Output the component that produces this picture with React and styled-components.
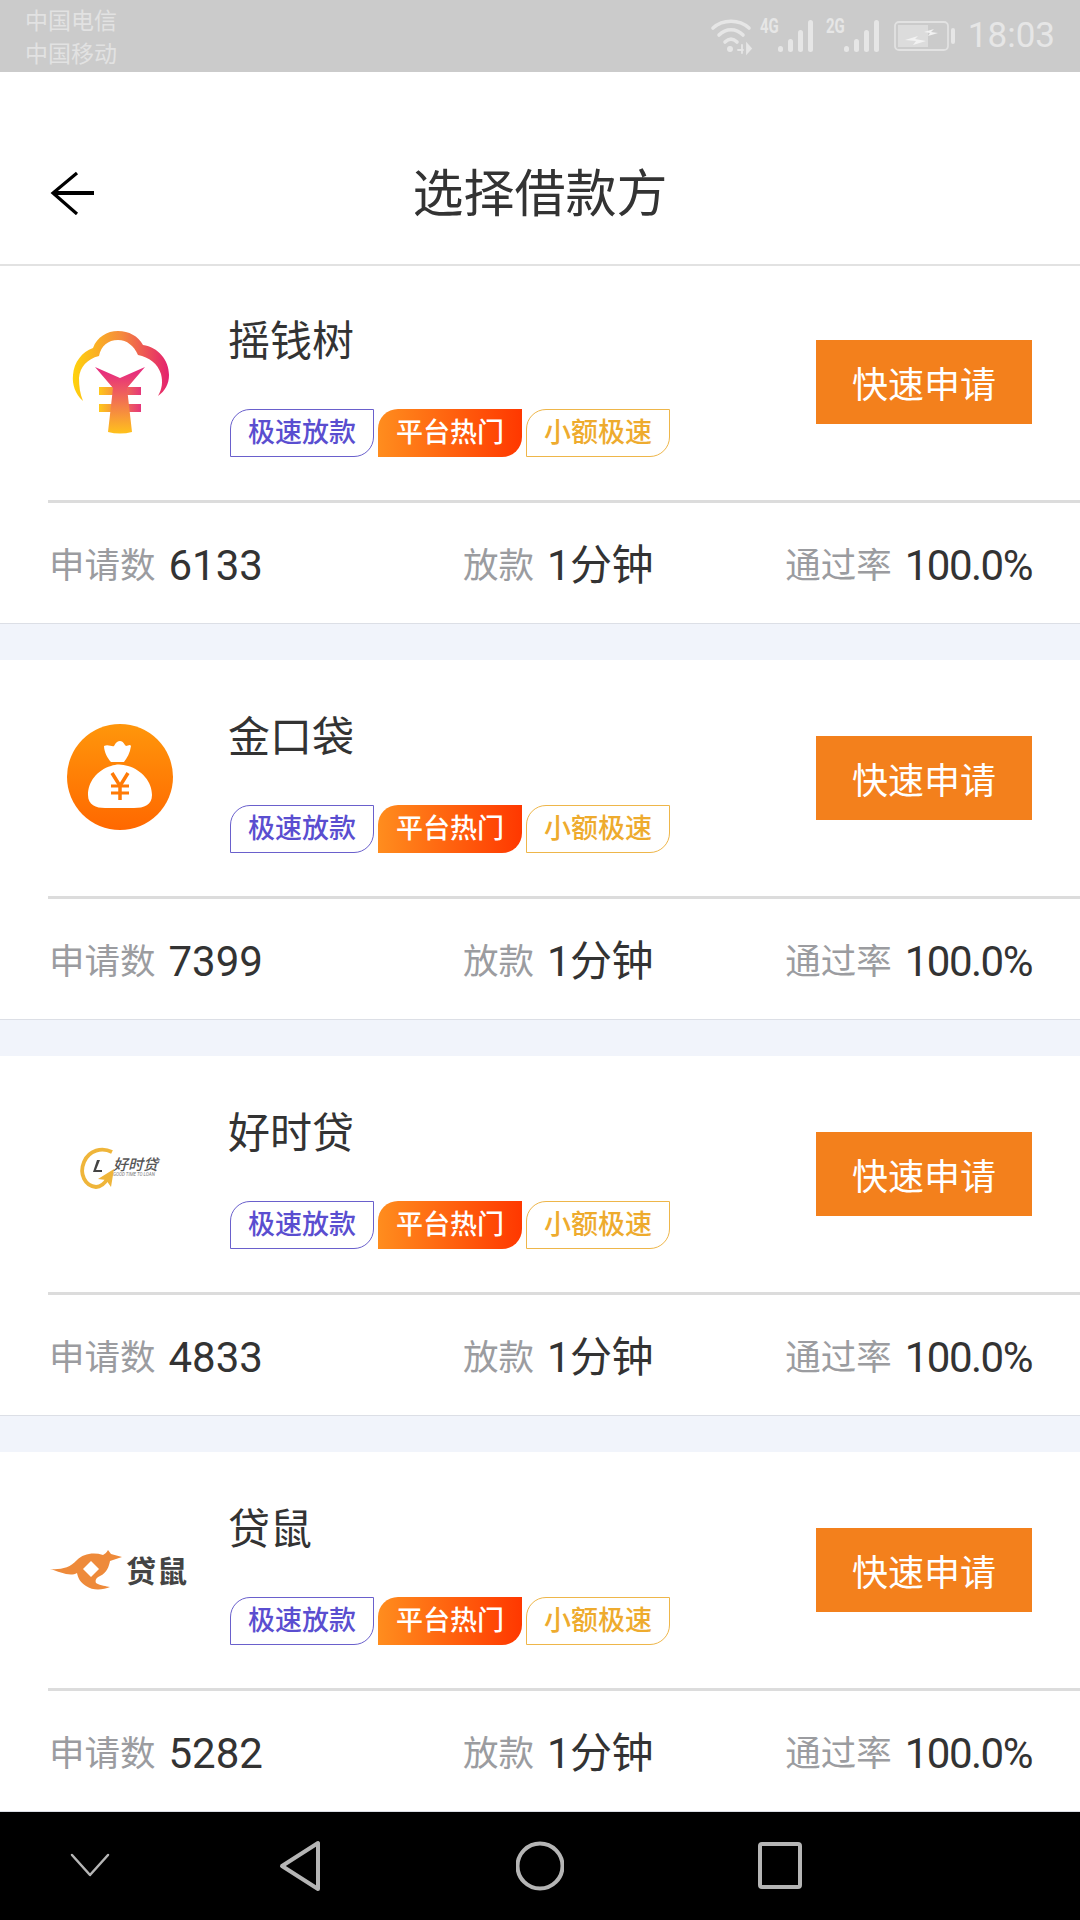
import React from 'react';
import styled, { createGlobalStyle } from 'styled-components';

const Global = createGlobalStyle`
  html, body { margin: 0; padding: 0; background: #fff; }
  body { font-family: Roboto, "Noto Sans CJK SC", sans-serif; }
  * { box-sizing: border-box; }
`;

const Page = styled.div`
  width: 1080px; height: 1920px; display: flex; flex-direction: column; overflow: hidden; background: #fff;
`;
const StatusBar = styled.div`
  height: 72px; flex: none; background: #cbcbcb; color: #e6e6e6;
  display: flex; align-items: center; justify-content: space-between; padding: 0 25px 0 25px;
`;
const Carriers = styled.div`
  display: flex; flex-direction: column; font-size: 23px; line-height: 33px; padding-top: 3px; color: #e2e2e2;
`;
const StatusRight = styled.div`
  display: flex; align-items: center;
  svg { display: block; flex: none; overflow: visible; }
`;
const WifiSlot = styled.div`
  margin-right: 7px;
`;
const BatterySlot = styled.div`
  margin-left: 2px;
`;
const Time = styled.span`
  font-size: 35px; line-height: 40px; margin-left: 12px; color: #e6e6e6;
`;
const Header = styled.header`
  flex: none; height: 192px; padding-top: 53px;
  display: grid; grid-template-columns: 1fr auto 1fr; align-items: center;
`;
const BackButton = styled.button`
  border: 0; background: none; padding: 0 0 3px 50px; margin: 0; display: flex; justify-content: flex-start;
`;
const Title = styled.h1`
  margin: 0; font-size: 51px; font-weight: 400; color: #333; line-height: 60px;
`;
const List = styled.main`
  flex: 1; min-height: 0; overflow: hidden;
`;
const Card = styled.section`
  height: 360px; background: #fff; border-top: 2px solid #fff; border-bottom: 1px solid #dcdfe6;
  &:first-child { border-top-color: #e2e2e2; }
`;
const Band = styled.div`
  height: 36px; background: #f1f4fb;
`;
const Top = styled.div`
  height: 234px; display: flex; align-items: flex-start; padding: 44px 48px 0 50px;
`;
const LogoBox = styled.div`
  width: 140px; height: 140px; flex: none; margin-right: 40px;
  svg { display: block; }
`;
const Info = styled.div`
  flex: 1; display: flex; flex-direction: column; margin-top: 8px;
`;
const Name = styled.div`
  font-size: 42px; line-height: 48px; color: #333; height: 48px; margin-left: -2px;
`;
const Tags = styled.div`
  display: flex; gap: 4px; margin-top: 43px;
`;
const Tag = styled.span`
  width: 144px; height: 48px; display: flex; align-items: center; justify-content: center;
  font-size: 27px; font-weight: 500; line-height: 1; border-radius: 20px 0 20px 0; padding-top: 1px;
  border: ${p => (p.$variant === 'hot' ? '0' : '1.5px solid')};
  color: ${p => (p.$variant === 'speed' ? '#5a4ed0' : p.$variant === 'small' ? '#eeab2e' : '#fff')};
  border-color: ${p => (p.$variant === 'speed' ? '#6a60cc' : '#eeb64a')};
  background: ${p => (p.$variant === 'hot' ? 'linear-gradient(90deg, #ff8d1e, #ff3800)' : '#fff')};
`;
const Apply = styled.button`
  width: 216px; height: 84px; flex: none; border: 0; background: #f3801c; color: #fff;
  font: 400 36px Roboto, "Noto Sans CJK SC", sans-serif; margin: 30px 0 0; padding: 0;
`;
const Divider = styled.div`
  height: 3px; margin-left: 48px; background: #dcdcdc;
`;
const Stats = styled.div`
  height: 120px; display: grid; grid-template-columns: 414px 1fr auto; align-items: center;
  padding: 5px 48px 0 49px;
`;
const Stat = styled.div`
  display: flex; align-items: center; gap: 13px;
`;
const Label = styled.span`
  font-size: 35.5px; color: #9b9ca0; line-height: 44px;
`;
const Value = styled.span`
  font-size: 42px; color: #333; line-height: 44px; letter-spacing: ${p => p.$track || 0}px;
`;
const NavBar = styled.nav`
  height: 108px; flex: none; background: #000; display: flex; align-items: center; justify-content: flex-start;
  svg { display: block; }
`;

const Wifi = () => (
  <svg width="42" height="36" viewBox="0 0 42 36" fill="none" stroke="#e6e6e6" strokeWidth="3.6" strokeLinecap="round">
    <path d="M2 10 C12 1 28 1 38 10" />
    <path d="M8 17 C15 10 25 10 32 17" />
    <path d="M14 24 C18 20 22 20 26 24" />
    <circle cx="19" cy="31" r="3" fill="#e6e6e6" stroke="none" />
    <path d="M27 32h5M31 27v8M36 26v9l4-4.500z" strokeWidth="1.800" fill="#e6e6e6" />
  </svg>
);

const Signal = ({ label }) => (
  <svg width="66" height="36" viewBox="0 0 66 36" fill="#e6e6e6">
    <text transform="translate(0 15) scale(1 1.35)" fontFamily="Roboto" fontWeight="700" fontSize="15">{label}</text>
    <rect x="18" y="28" width="5" height="6" rx="2.500" />
    <rect x="28" y="21" width="5" height="13" rx="2.500" />
    <rect x="38" y="12" width="5" height="22" rx="2.500" />
    <rect x="48" y="2" width="5" height="32" rx="2.500" />
  </svg>
);

const Battery = () => (
  <svg width="62" height="32" viewBox="0 0 62 32">
    <rect x="1" y="2" width="53" height="28" rx="4" fill="none" stroke="#e2e2e2" strokeWidth="1.800" />
    <rect x="4" y="5" width="30" height="22" fill="#dcdcdc" />
    <path d="M11 20 L24 16 L21 19 L32 21 L19 25 L22 21z M30 12 L40 9 L37 12 L44 13 L34 16 L36 13z" fill="#f2f2f2" />
    <rect x="57" y="8" width="4" height="16" rx="2" fill="#e6e6e6" />
  </svg>
);

const BackArrow = () => (
  <svg width="44" height="44" viewBox="0 0 44 44" fill="none" stroke="#000" strokeLinecap="butt">
    <path d="M3 22H44" strokeWidth="4" />
    <path d="M27 2 L3 22 L27 43" strokeWidth="3.200" />
  </svg>
);

const TreeLogo = () => (
  <svg width="140" height="140" viewBox="0 0 140 140">
    <defs>
      <linearGradient id="tree-arc" x1="0" x2="1" y1="0" y2="0">
        <stop offset="0" stopColor="#ffd30c" />
        <stop offset="0.5" stopColor="#f58b3c" />
        <stop offset="1" stopColor="#e4206f" />
      </linearGradient>
      <linearGradient id="tree-yen" x1="0" x2="0" y1="0" y2="1">
        <stop offset="0.1" stopColor="#e7307c" />
        <stop offset="1" stopColor="#ffc21c" />
      </linearGradient>
      <linearGradient id="tree-bar" x1="0" x2="1" y1="0" y2="0">
        <stop offset="0" stopColor="#ffc81a" />
        <stop offset="1" stopColor="#e5357a" />
      </linearGradient>
    </defs>
    <path fill="url(#tree-arc)" d="M33 91 C25 84 22 74 23 65 C24 52 32 42 43 38 C47 27 57 21 68 21 C79 21 88 26 93 35 C108 37 119 50 119 65 C119 74 115 81 108 86 C112 79 113 72 111 64 C108 54 99 47 88 45 C84 36 77 30 68 30 C58 30 51 36 49 46 C37 49 30 57 29 68 C29 76 30 84 33 91z" />
    <path fill="url(#tree-bar)" d="M49 77h42v8H49zM49 94h42v8H49z" />
    <path fill="url(#tree-yen)" d="M45 57 L70 68 L95 57 L77 78 L82 122 C74 124 66 124 58 122 L63 78z" />
  </svg>
);

const BagLogo = () => (
  <svg width="140" height="140" viewBox="0 0 140 140">
    <defs>
      <linearGradient id="bag" x1="0" x2="0" y1="0" y2="1">
        <stop offset="0" stopColor="#ff960b" />
        <stop offset="1" stopColor="#ff6800" />
      </linearGradient>
    </defs>
    <g transform="translate(0 4)">
      <circle cx="70" cy="67" r="53" fill="url(#bag)" />
      <path fill="#fff" d="M54 36 C58 34 62 37 64 36 C66 32 68 31 70 31 C73 31 74 34 76 36 C78 36 80 34 81 36 C80 43 77 48 74 52 L61 52 C58 49 54 42 54 36z" />
      <path fill="#fff" d="M61 56 C66 54 72 54 78 56 C92 60 102 72 102 85 C102 95 94 98 84 98 L55 98 C46 98 38 95 38 85 C38 72 47 60 61 56z" />
      <path fill="none" stroke="#ff7a05" strokeWidth="3.500" d="M62 63 L70 76 L78 63 M70 76 V90" />
      <path fill="none" stroke="#ff7a05" strokeWidth="2.800" d="M61 76 H79 M61 83 H79" />
    </g>
  </svg>
);

const TimeLogo = () => (
  <svg width="140" height="140" viewBox="0 0 140 140">
    <path fill="none" stroke="#efb53a" strokeWidth="3.800" d="M62 50 C52 45 39 48 34 60 C29 72 35 84 46 85 C51 85 55 81 58 76" />
    <path fill="#efb53a" d="M64 67 L61 85 L56 78 L48 77z" />
    <path fill="#444" d="M50 58 L46 68 L52 68 L52 70 L43 70 L47 58z" />
    <text x="63" y="68" fontFamily="'Noto Sans CJK SC', sans-serif" fontStyle="italic" fontWeight="500" fontSize="15" fill="#555">好时贷</text>
    <text x="63" y="74" fontFamily="Roboto, sans-serif" fontStyle="italic" fontSize="4.500" fill="#777">GOOD TIME TO LOAN</text>
  </svg>
);

const RooLogo = () => (
  <svg width="140" height="140" viewBox="0 0 140 140">
    <path fill="#ee8a3a" d="M0 71 C10 72 20 70 27 62 C33 56 43 54 53 57 C55 56 57 54 58 52 L61 56 L72 59 L60 63 C59 68 57 75 50 78 C46 80 45 82 46 85 C51 88 56 88 60 89 C53 92 43 93 36 88 C30 84 28 80 27 75 C20 79 10 74 0 71z" />
    <path fill="#fff" d="M41 63 L49 71 L41 79 L33 71z" />
    <text x="76" y="84" fontFamily="'Noto Sans CJK SC', sans-serif" fontWeight="700" fontSize="30" fill="#444" letterSpacing="1">贷鼠</text>
  </svg>
);

const NavIcon = styled.svg`
  width: 48px; height: 52px; margin-left: ${p => p.$gap}px;
`;
const Nav = () => (
  <NavBar>
    <NavIcon $gap={69} viewBox="0 0 48 52" fill="none" stroke="#b5b5b5" strokeWidth="2.500" strokeLinecap="round" strokeLinejoin="round">
      <path d="M3 15 L21 35 L39 15" />
    </NavIcon>
    <NavIcon $gap={159} viewBox="0 0 48 52" fill="none" stroke="#b5b5b5" strokeWidth="4" strokeLinecap="round" strokeLinejoin="round">
      <path d="M42 3 V49 L6 26z" />
    </NavIcon>
    <NavIcon $gap={192} viewBox="0 0 48 52" fill="none" stroke="#b5b5b5" strokeWidth="4">
      <circle cx="24" cy="26" r="22.500" />
    </NavIcon>
    <NavIcon $gap={190} viewBox="0 0 48 52" fill="none" stroke="#b5b5b5" strokeWidth="4" strokeLinejoin="round">
      <rect x="6" y="4" width="40" height="43" rx="2" />
    </NavIcon>
  </NavBar>
);

const lenders = [
  { name: '摇钱树', count: 6133, Logo: TreeLogo },
  { name: '金口袋', count: 7399, Logo: BagLogo },
  { name: '好时贷', count: 4833, Logo: TimeLogo },
  { name: '贷鼠', count: 5282, Logo: RooLogo },
];

export default function App() {
  return (
    <Page>
      <Global />
      <StatusBar>
        <Carriers>
          <span>中国电信</span>
          <span>中国移动</span>
        </Carriers>
        <StatusRight>
          <WifiSlot><Wifi /></WifiSlot>
          <Signal label="4G" />
          <Signal label="2G" />
          <BatterySlot><Battery /></BatterySlot>
          <Time>18:03</Time>
        </StatusRight>
      </StatusBar>
      <Header>
        <BackButton aria-label="返回"><BackArrow /></BackButton>
        <Title>选择借款方</Title>
      </Header>
      <List>
        {lenders.map(({ name, count, Logo }) => (
          <React.Fragment key={name}>
            <Card>
              <Top>
                <LogoBox><Logo /></LogoBox>
                <Info>
                  <Name>{name}</Name>
                  <Tags>
                    <Tag $variant="speed">极速放款</Tag>
                    <Tag $variant="hot">平台热门</Tag>
                    <Tag $variant="small">小额极速</Tag>
                  </Tags>
                </Info>
                <Apply>快速申请</Apply>
              </Top>
              <Divider />
              <Stats>
                <Stat><Label>申请数</Label><Value>{count}</Value></Stat>
                <Stat><Label>放款</Label><Value $track={-0.5}>1分钟</Value></Stat>
                <Stat><Label>通过率</Label><Value $track={-1.5}>100.0%</Value></Stat>
              </Stats>
            </Card>
            <Band />
          </React.Fragment>
        ))}
      </List>
      <Nav />
    </Page>
  );
}
